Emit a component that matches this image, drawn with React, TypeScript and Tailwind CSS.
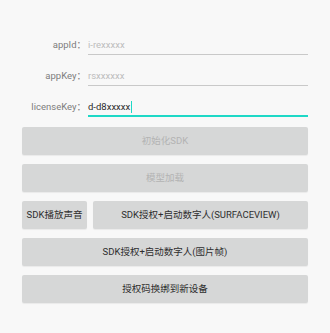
import React from "react";

const font = {
  fontFamily: 'Roboto, "Noto Sans CJK SC", "Noto Sans", sans-serif',
};

interface FieldProps {
  label: string;
  value?: string;
  hint?: string;
  focused?: boolean;
}

function Field({ label, value, hint, focused }: FieldProps) {
  return (
    <div className="flex h-[18px]">
      <div className="flex w-[64px] items-center justify-end pb-px text-[9.5px] text-[#7d7d7d]">
        {label}
      </div>
      <div
        className={
          focused
            ? "ml-[2px] flex flex-1 items-center border-b-2 border-[#1ed8c6] text-[9.5px] text-[#2b2b2b]"
            : "ml-[2px] flex flex-1 items-center border-b border-[#c9c9c9] pb-px text-[9.5px] text-[#bdbdbd]"
        }
      >
        {value ?? hint}
        {focused && <span className="ml-px h-[12px] w-px bg-[#1ed8c6]" />}
      </div>
    </div>
  );
}

function Btn({
  children,
  disabled,
  className = "",
}: {
  children: React.ReactNode;
  disabled?: boolean;
  className?: string;
}) {
  return (
    <button
      type="button"
      className={`flex h-[28px] items-center justify-center rounded-[2px] bg-[#d6d7d7] text-[9.5px] shadow-[0_1px_1px_rgba(0,0,0,0.06)] ${
        disabled ? "text-[#b3b3b3]" : "text-[#2e2e2e]"
      } ${className}`}
    >
      {children}
    </button>
  );
}

export default function App() {
  return (
    <div className="h-[333px] w-[330px] bg-[#f8f8f8] px-[22px] pt-[37px]" style={font}>
      <div className="flex flex-col gap-[13px]">
        <Field label="appId：" hint="i-rexxxxx" />
        <Field label="appKey：" hint="rsxxxxxx" />
        <Field label="licenseKey：" value="d-d8xxxxx" focused />
      </div>
      <div className="mt-[10px] flex flex-col gap-[9px]">
        <Btn disabled>初始化SDK</Btn>
        <Btn disabled>模型加载</Btn>
        <div className="flex gap-[6px]">
          <Btn className="w-[65px]">SDK播放声音</Btn>
          <Btn className="flex-1">SDK授权+启动数字人(SURFACEVIEW)</Btn>
        </div>
        <Btn>SDK授权+启动数字人(图片帧)</Btn>
        <Btn>授权码换绑到新设备</Btn>
      </div>
    </div>
  );
}
